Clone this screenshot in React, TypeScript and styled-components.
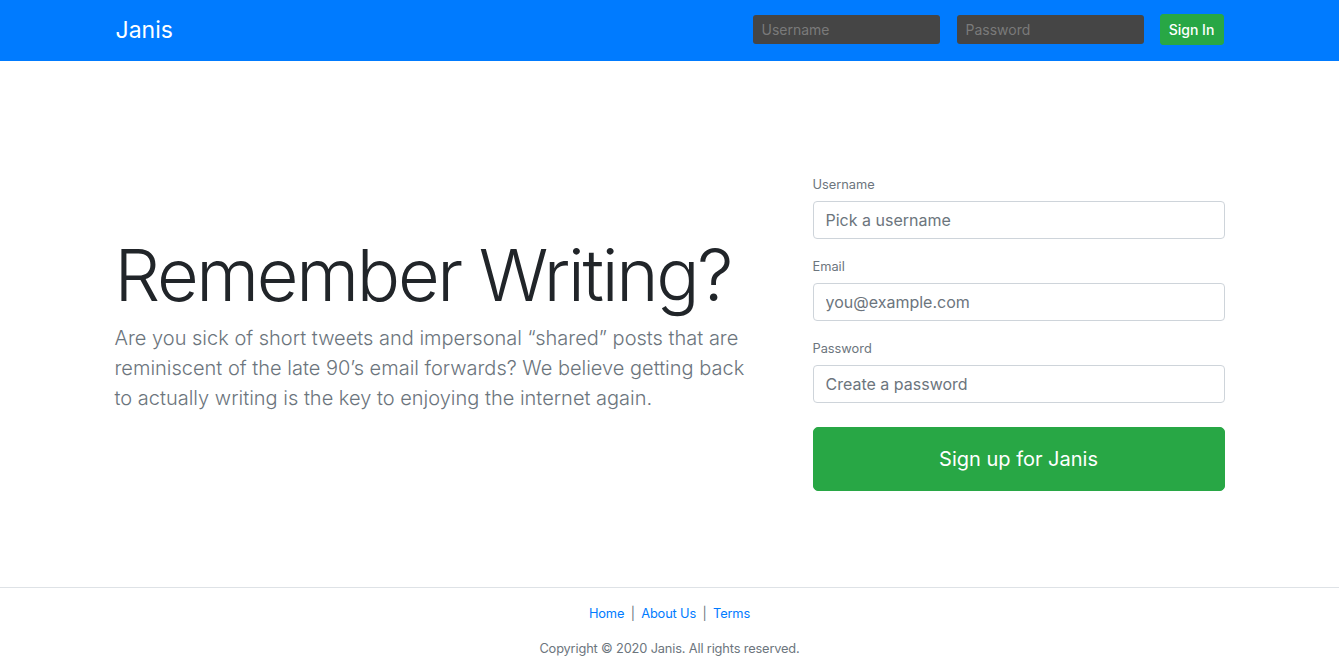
import React from "react";
import styled, { createGlobalStyle } from "styled-components";

const Global = createGlobalStyle`
  * { box-sizing: border-box; }
  html, body { margin: 0; padding: 0; background: #fff; }
  body {
    font-family: "Inter", "Noto Sans", sans-serif;
    font-size: 16px;
    line-height: 1.5;
    color: #212529;
  }
`;

const Header = styled.header`
  background: #007bff;
  margin-bottom: 16px;
`;

const HeaderInner = styled.div`
  width: 1140px;
  height: 61px;
  margin: 0 auto;
  padding: 0 15px 2px;
  display: flex;
  align-items: center;
`;

const Brand = styled.h4`
  margin: 3px auto 0 1px;
  font-size: 23px;
  font-weight: 400;
  line-height: 1.2;
  color: #fff;
`;

const HeaderForm = styled.form`
  display: flex;
  align-items: center;
  gap: 17px;
  margin: 0 1px 0 0;
`;

const DarkInput = styled.input`
  width: 187px;
  height: 29px;
  border: none;
  border-radius: 3px;
  background: #454545;
  color: #fff;
  font-family: inherit;
  font-size: 14px;
  padding: 0 9px;
  &::placeholder { color: #7a7a7a; }
`;

const SmallButton = styled.button`
  height: 31px;
  width: 64px;
  margin-left: -1px;
  padding: 0;
  border: 1px solid #28a745;
  border-radius: 3px;
  background: #28a745;
  color: #fff;
  font-family: inherit;
  font-size: 14px;
  font-weight: 500;
`;

const Main = styled.main`
  width: 1140px;
  margin: 0 auto;
  padding: 48px 15px;
`;

const Row = styled.div`
  display: flex;
  align-items: center;
`;

const IntroCol = styled.div`
  width: 635px;
  padding: 48px 0 51px;
`;

const Title = styled.h1`
  margin: 0 0 5px;
  font-size: 72px;
  font-weight: 300;
  line-height: 1.2;
  color: #212529;
  letter-spacing: -2.3px;
`;

const Lead = styled.p`
  margin: 0 0 16px;
  font-size: 20px;
  font-weight: 300;
  line-height: 30px;
  color: #6c757d;
`;

const FormCol = styled.div`
  flex: 1;
  padding: 48px 0 48px 63px;
`;

const Group = styled.div`
  margin-bottom: 16px;
  &:last-of-type { margin-bottom: 0; }
`;

const Label = styled.label`
  display: block;
  margin-bottom: 4px;
  line-height: 24px;
  font-size: 12.8px;
  color: #6c757d;
`;

const Field = styled.input`
  display: block;
  width: 100%;
  height: 38px;
  padding: 6px 12px;
  border: 1px solid #ced4da;
  border-radius: 4px;
  font-family: inherit;
  font-size: 16px;
  color: #495057;
  &::placeholder { color: #6c757d; }
`;

const BigButton = styled.button`
  display: block;
  width: 100%;
  height: 64px;
  margin-top: 24px;
  border: 1px solid #28a745;
  border-radius: 5px;
  background: #28a745;
  color: #fff;
  font-family: inherit;
  font-size: 20px;
`;

const Footer = styled.footer`
  border-top: 1px solid #dee2e6;
  padding: 16px 0;
  text-align: center;
  font-size: 12.8px;
  color: #6c757d;
  letter-spacing: -0.15px;
`;

const FooterLine = styled.p<{ $last?: boolean }>`
  margin: 0 0 ${(p) => (p.$last ? "0" : "16px")};
  line-height: 19.2px;
`;

const FooterLink = styled.a`
  color: #007bff;
  text-decoration: none;
  margin: 0 3px;
`;

export default function App() {
  return (
    <>
      <Global />
      <Header>
        <HeaderInner>
          <Brand>Janis</Brand>
          <HeaderForm onSubmit={(e) => e.preventDefault()}>
            <DarkInput placeholder="Username" />
            <DarkInput placeholder="Password" type="password" />
            <SmallButton>Sign In</SmallButton>
          </HeaderForm>
        </HeaderInner>
      </Header>
      <Main>
        <Row>
          <IntroCol>
            <Title>Remember Writing?</Title>
            <Lead>
              Are you sick of short tweets and impersonal “shared” posts that are reminiscent of
              the late 90’s email forwards? We believe getting back to actually writing is the key
              to enjoying the internet again.
            </Lead>
          </IntroCol>
          <FormCol>
            <form onSubmit={(e) => e.preventDefault()}>
              <Group>
                <Label>Username</Label>
                <Field placeholder="Pick a username" />
              </Group>
              <Group>
                <Label>Email</Label>
                <Field placeholder="you@example.com" />
              </Group>
              <Group>
                <Label>Password</Label>
                <Field placeholder="Create a password" type="password" />
              </Group>
              <BigButton>Sign up for Janis</BigButton>
            </form>
          </FormCol>
        </Row>
      </Main>
      <Footer>
        <FooterLine>
          <FooterLink>Home</FooterLink> | <FooterLink>About Us</FooterLink> |{" "}
          <FooterLink>Terms</FooterLink>
        </FooterLine>
        <FooterLine $last>Copyright © 2020 Janis. All rights reserved.</FooterLine>
      </Footer>
    </>
  );
}
